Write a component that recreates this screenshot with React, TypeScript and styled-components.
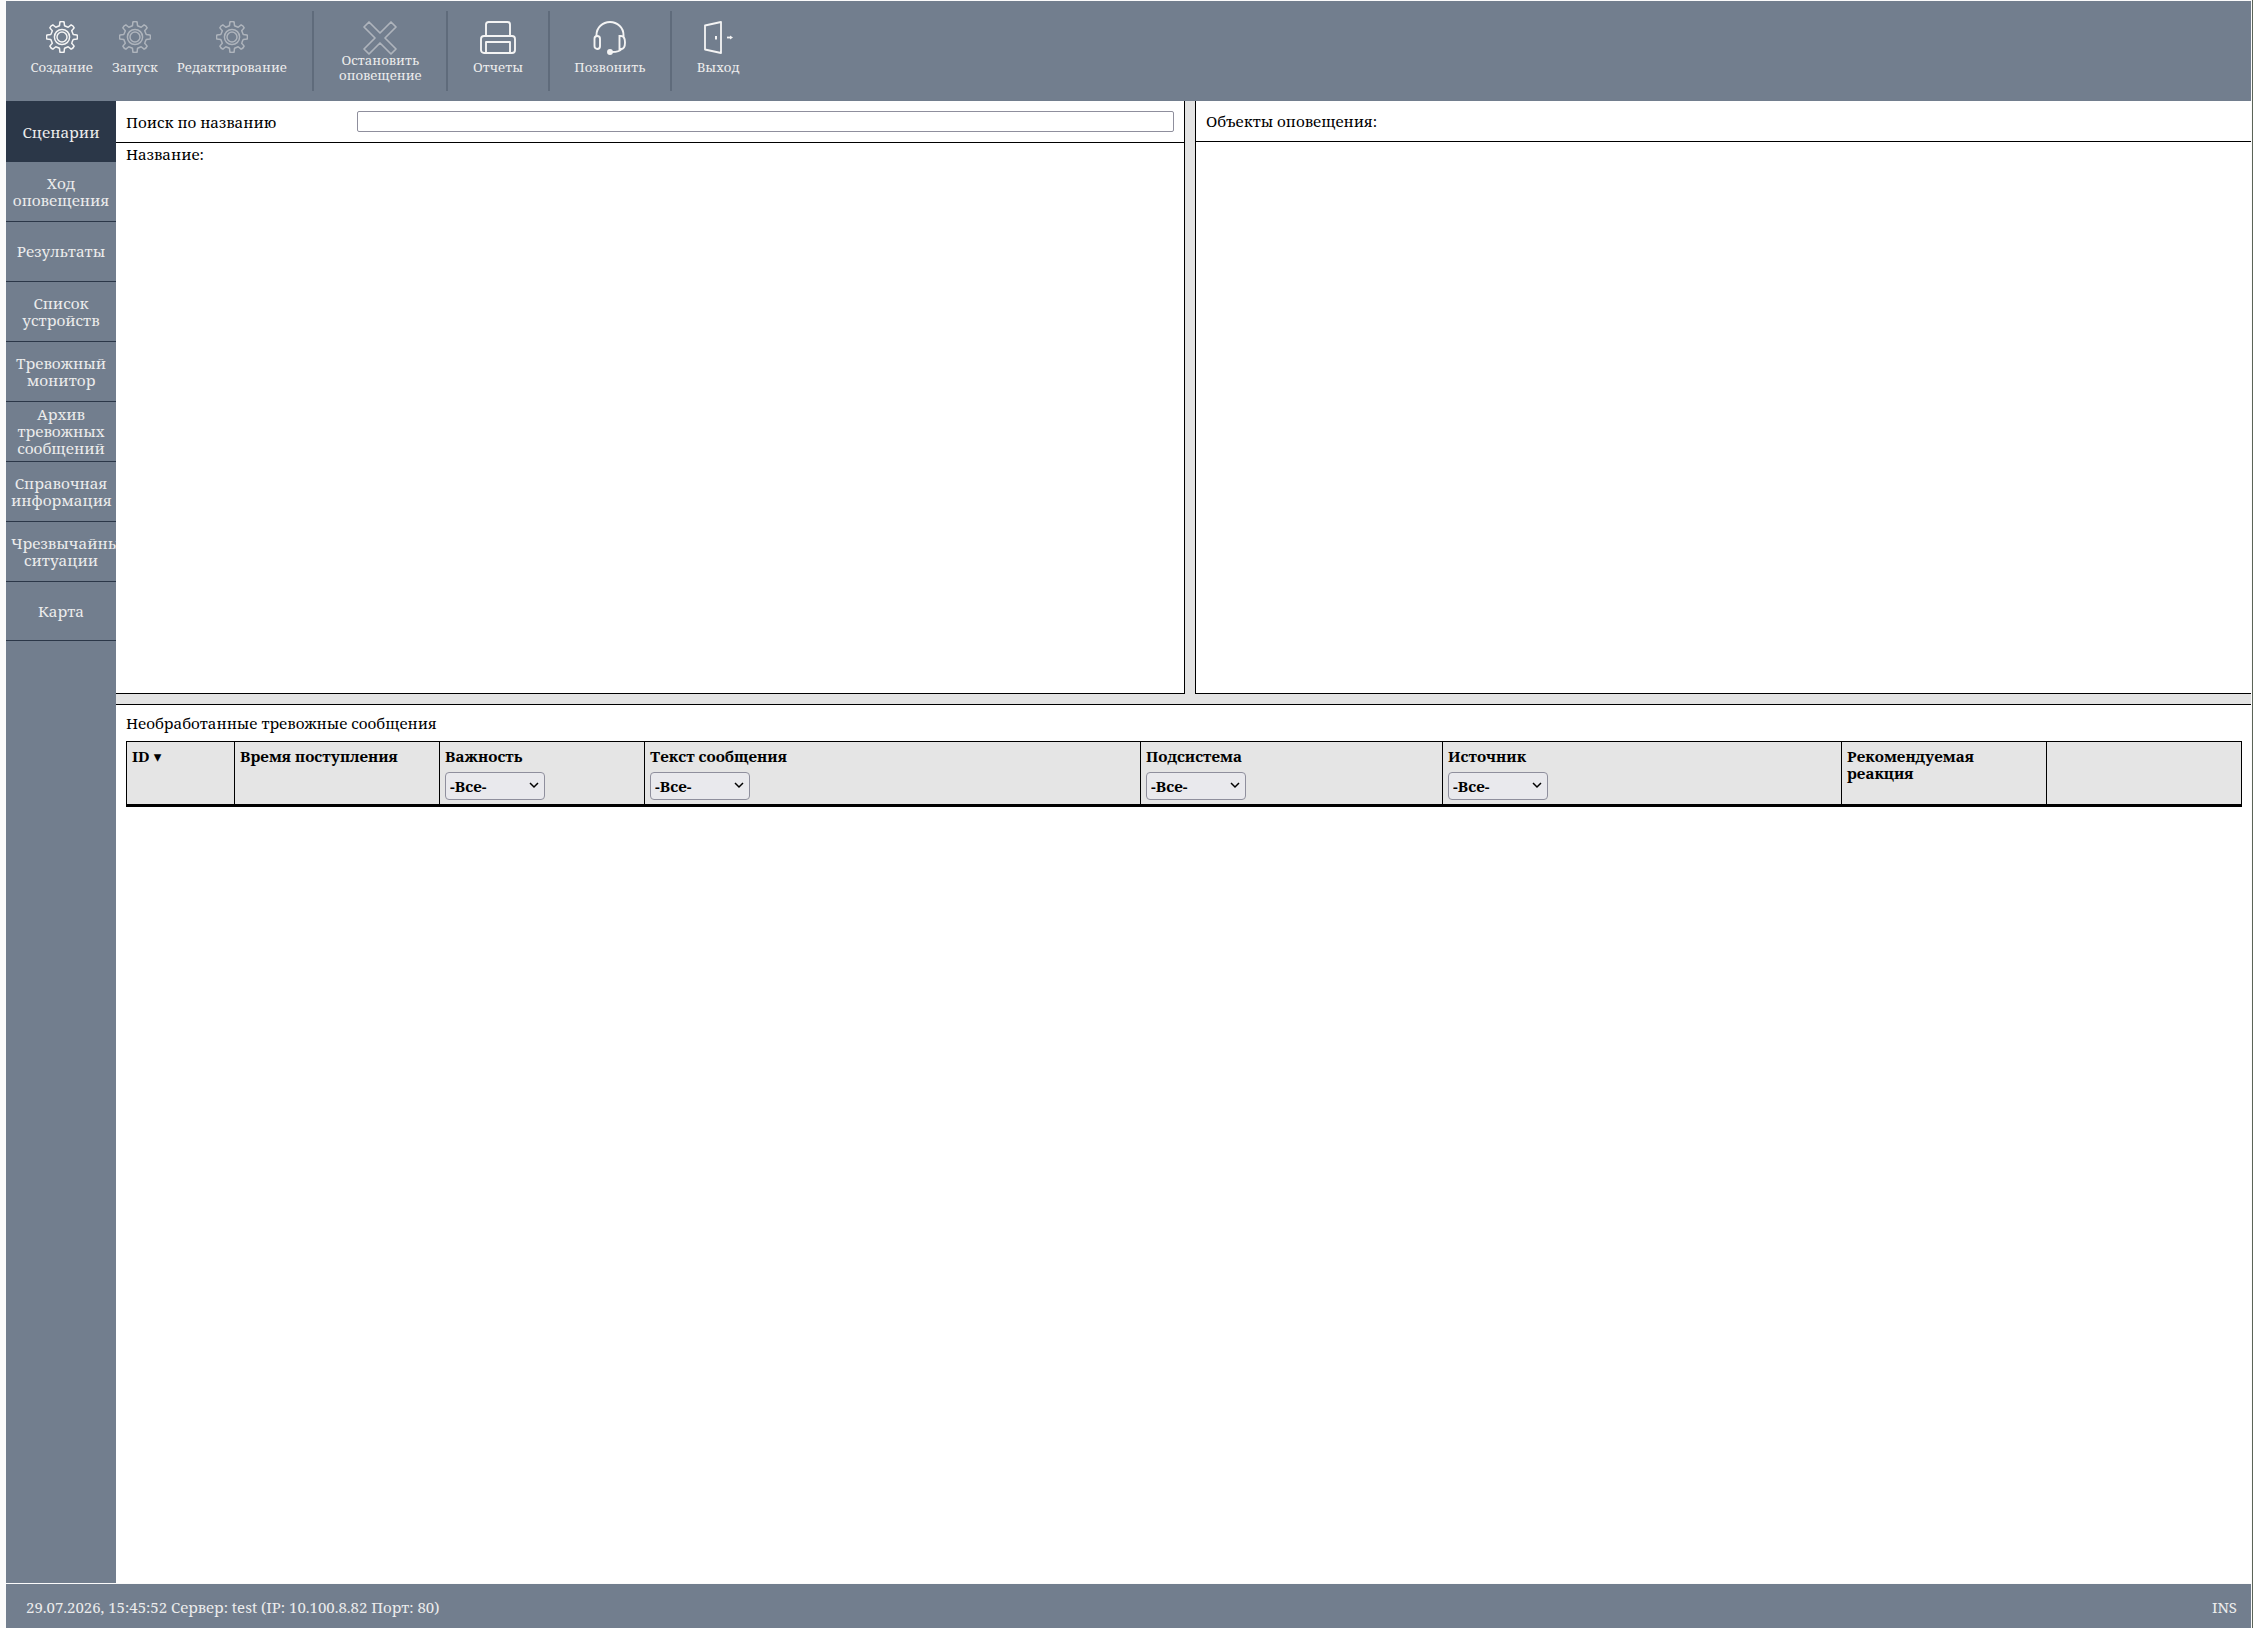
import React from 'react';
import styled, { createGlobalStyle } from 'styled-components';

const GlobalStyle = createGlobalStyle`
  html, body {
    margin: 0;
    padding: 0;
    height: 100%;
    background: #fbfbfb;
  }
  #root {
    height: 100%;
  }
`;

const Page = styled.div`
  box-sizing: border-box;
  height: 100vh;
  padding: 1px 1px 0 6px;
  display: flex;
  flex-direction: column;
  overflow: hidden;
  font-family: 'Noto Serif', 'Droid Serif', 'DejaVu Serif', serif;
  border-right: 1px solid #5b6458;
`;

const Toolbar = styled.div`
  height: 100px;
  flex: none;
  display: flex;
  align-items: center;
  padding-left: 15px;
  background-color: #727e8e;
`;

const ToolButton = styled.div<{ $wide?: boolean }>`
  height: 80px;
  padding: 0 ${({ $wide }) => ($wide ? '24.7px' : '9.5px')};
  display: flex;
  flex-direction: column;
  align-items: center;
  color: #ececec;
  font-size: 13.2px;
  line-height: 15px;
  text-align: center;
  white-space: pre-line;
`;

const IconSlot = styled.div<{ $disabled?: boolean }>`
  height: 32px;
  margin-top: 10px;
  color: ${({ $disabled }) => ($disabled ? '#aeb4bc' : '#f4f4f4')};
  svg {
    display: block;
  }
`;

const ToolLabel = styled.div<{ $double?: boolean }>`
  margin-top: ${({ $double }) => ($double ? '0' : '7px')};
`;

const Divider = styled.div<{ $first?: boolean }>`
  width: 2px;
  height: 80px;
  flex: none;
  margin-left: ${({ $first }) => ($first ? '16px' : '0')};
  background-color: #5f6b7b;
`;

const Body = styled.div`
  flex: 1;
  min-height: 0;
  display: flex;
`;

const Sidebar = styled.div`
  width: 110px;
  flex: none;
  background-color: #727e8e;
`;

const NavItem = styled.div<{ $active?: boolean }>`
  box-sizing: border-box;
  height: ${({ $active }) => ($active ? '61px' : '60px')};
  padding: ${({ $active }) => ($active ? '2px' : '0')} 5px 0;
  display: flex;
  align-items: center;
  justify-content: flex-start;
  overflow: hidden;
  background-color: ${({ $active }) => ($active ? '#2b3748' : 'transparent')};
  border-bottom: ${({ $active }) => ($active ? 'none' : '1px solid #2b3748')};
  color: #ececec;
  font-size: 15.3px;
  line-height: 17px;
  text-align: center;

  &:last-child {
    height: 59px;
  }
`;

const NavText = styled.div`
  width: 100px;
  flex: none;
  white-space: pre-line;
`;

const Content = styled.div`
  flex: 1;
  min-width: 0;
  display: flex;
  flex-direction: column;
  background-color: #fff;
`;

const TopArea = styled.div`
  height: 593px;
  flex: none;
  display: flex;
  background-color: #e3e3e3;
`;

const LeftPanel = styled.div`
  box-sizing: border-box;
  width: 1069px;
  flex: none;
  background-color: #fff;
  border-right: 1px solid #000;
  border-bottom: 1px solid #000;
`;

const RightPanel = styled.div`
  flex: 1;
  margin-left: 10px;
  background-color: #fff;
  border-left: 1px solid #000;
  border-bottom: 1px solid #000;
`;

const SearchRow = styled.div`
  height: 42px;
  box-sizing: border-box;
  padding: 0 10px;
  display: flex;
  align-items: center;
  border-bottom: 1px solid #000;
  font-size: 15.2px;
`;

const SearchLabel = styled.label`
  width: 231px;
  flex: none;
  padding-top: 1px;
`;

const SearchInput = styled.input`
  box-sizing: border-box;
  flex: none;
  width: 817px;
  height: 21px;
  padding: 0 4px;
  background: #fff;
  border: 1px solid #8f8f9d;
  border-radius: 2px;
`;

const NameLabel = styled.div`
  padding: 3px 10px;
  font-size: 15.2px;
  line-height: 17px;
`;

const ObjectsHeader = styled.div`
  height: 41px;
  box-sizing: border-box;
  padding: 0 10px;
  display: flex;
  align-items: center;
  border-bottom: 1px solid #000;
  font-size: 15.2px;
`;

const GutterBar = styled.div`
  height: 10px;
  flex: none;
  background-color: #e3e3e3;
  border-bottom: 1px solid #000;
`;

const AlarmSection = styled.div`
  flex: 1;
  padding: 9px 7px 0 10px;
`;

const AlarmTitle = styled.div`
  height: 27px;
  font-size: 15.2px;
  line-height: 18px;
`;

const AlarmTable = styled.table`
  width: 2116px;
  table-layout: fixed;
  border-collapse: collapse;
  border-top: 1px solid #000;
  border-left: 1px solid #000;
  border-bottom: 3px solid #000;
`;

const HeadCell = styled.th<{ $width: number }>`
  box-sizing: border-box;
  width: ${({ $width }) => $width}px;
  height: 64px;
  padding: 6px 5px 0;
  vertical-align: top;
  text-align: left;
  background-color: #e5e5e5;
  border-right: 1px solid #000;
  font-size: 15.2px;
  line-height: 17px;
  font-weight: bold;
`;

const SelectWrap = styled.div`
  position: relative;
  width: 100px;
  height: 28px;
  margin-top: 7px;
`;

const FilterSelect = styled.select`
  appearance: none;
  box-sizing: border-box;
  width: 100%;
  height: 100%;
  padding: 0 4px;
  background-color: #e9e9ed;
  border: 1px solid #8f8f9d;
  border-radius: 4px;
  color: #000;
  font-family: inherit;
  font-size: 15.2px;
  font-weight: bold;
`;

const Chevron = styled.svg`
  position: absolute;
  top: 10px;
  right: 6px;
  pointer-events: none;
`;

const StatusBar = styled.div`
  box-sizing: border-box;
  height: 44px;
  flex: none;
  margin-top: 1px;
  padding: 1px 14px 0 20px;
  display: flex;
  align-items: center;
  justify-content: space-between;
  background-color: #727e8e;
  color: #ececec;
  font-size: 15px;
`;

// 8-toothed outline, so every gear in the toolbar is the same shape
const gearPath = (() => {
  const pts: string[] = [];
  for (let i = 0; i < 8; i++) {
    const a = (i * Math.PI) / 4;
    const at = (r: number, d: number) => {
      const t = a + d;
      return `${(16 + r * Math.sin(t)).toFixed(2)} ${(16 - r * Math.cos(t)).toFixed(2)}`;
    };
    pts.push(
      `${i === 0 ? 'M' : 'L'}${at(11.5, -0.22)}`,
      `L${at(15.2, -0.14)}`,
      `Q${at(15.9, 0)} ${at(15.2, 0.14)}`,
      `L${at(11.5, 0.22)}`,
      `Q${at(11.2, 0.39)} ${at(11.5, 0.56)}`
    );
  }
  return pts.join(' ') + ' Z';
})();

const GearIcon = () => (
  <svg width="32" height="32" viewBox="0 0 32 32" fill="none" stroke="currentColor" strokeWidth="1.5">
    <path d={gearPath} strokeLinejoin="round" />
    <circle cx="16" cy="16" r="7.6" />
    <circle cx="16" cy="16" r="5" />
  </svg>
);

const StopIcon = () => (
  <svg width="34" height="34" viewBox="0 0 34 34" fill="none" stroke="currentColor" strokeWidth="1.7" strokeLinejoin="round">
    <path d="M6 1 L17 12 L28 1 L33 6 L22 17 L33 28 L28 33 L17 22 L6 33 L1 28 L12 17 L1 6 Z" />
  </svg>
);

const PrinterIcon = () => (
  <svg width="36" height="33" viewBox="0 0 36 33" fill="none" stroke="currentColor" strokeWidth="1.9" strokeLinejoin="round">
    <path d="M6 15 V3.500 Q6 1 8.500 1 H27.500 Q30 1 30 3.500 V15" />
    <rect x="1" y="15" width="34" height="17" rx="3" />
    <path d="M6 32 V21 H30 V32" />
  </svg>
);

const HeadsetIcon = () => (
  <svg width="34" height="34" viewBox="0 0 34 34" fill="none" stroke="currentColor" strokeWidth="1.9" strokeLinecap="round">
    <path d="M3.500 15 V14 A13.500 13 0 0 1 30.500 14 V15" />
    <rect x="1.500" y="15" width="5.500" height="13" rx="2.750" />
    <path d="M26.500 15 H28 Q32 15 32 21.500 Q32 28 28 28 H26.500 Z" />
    <path d="M28.500 28 Q26.500 31 19 31" />
    <circle cx="17" cy="31" r="2" fill="currentColor" />
  </svg>
);

const ExitIcon = () => (
  <svg width="31" height="33" viewBox="0 0 31 33" fill="none" stroke="currentColor" strokeWidth="1.8" strokeLinejoin="round">
    <path d="M2 4.500 L18 1 V32 L2 28.500 Z" />
    <rect x="12" y="15" width="2" height="3.500" fill="currentColor" stroke="none" />
    <path d="M24 16.500 H27" />
    <path d="M27 14.500 L30 16.500 L27 18.500 Z" fill="currentColor" stroke="none" />
  </svg>
);

const navItems = [
  'Ход\nоповещения',
  'Результаты',
  'Список\nустройств',
  'Тревожный\nмонитор',
  'Архив\nтревожных\nсообщений',
  'Справочная\nинформация',
  'Чрезвычайные\nситуации',
  'Карта',
];

const columns = [
  { title: 'ID ▾', width: 108 },
  { title: 'Время поступления', width: 205 },
  { title: 'Важность', width: 205, filter: true },
  { title: 'Текст сообщения', width: 496, filter: true },
  { title: 'Подсистема', width: 302, filter: true },
  { title: 'Источник', width: 399, filter: true },
  { title: 'Рекомендуемая реакция', width: 205 },
  { title: '', width: 195 },
];

const App = () => {
  return (
    <Page>
      <GlobalStyle />
      <Toolbar>
        <ToolButton>
          <IconSlot><GearIcon /></IconSlot>
          <ToolLabel>Создание</ToolLabel>
        </ToolButton>
        <ToolButton>
          <IconSlot $disabled><GearIcon /></IconSlot>
          <ToolLabel>Запуск</ToolLabel>
        </ToolButton>
        <ToolButton>
          <IconSlot $disabled><GearIcon /></IconSlot>
          <ToolLabel>Редактирование</ToolLabel>
        </ToolButton>
        <Divider $first />
        <ToolButton $wide>
          <IconSlot $disabled><StopIcon /></IconSlot>
          <ToolLabel $double>{'Остановить\nоповещение'}</ToolLabel>
        </ToolButton>
        <Divider />
        <ToolButton $wide>
          <IconSlot><PrinterIcon /></IconSlot>
          <ToolLabel>Отчеты</ToolLabel>
        </ToolButton>
        <Divider />
        <ToolButton $wide>
          <IconSlot><HeadsetIcon /></IconSlot>
          <ToolLabel>Позвонить</ToolLabel>
        </ToolButton>
        <Divider />
        <ToolButton $wide>
          <IconSlot><ExitIcon /></IconSlot>
          <ToolLabel>Выход</ToolLabel>
        </ToolButton>
      </Toolbar>

      <Body>
        <Sidebar>
          <NavItem $active><NavText>Сценарии</NavText></NavItem>
          {navItems.map((item) => (
            <NavItem key={item}><NavText>{item}</NavText></NavItem>
          ))}
        </Sidebar>

        <Content>
          <TopArea>
            <LeftPanel>
              <SearchRow>
                <SearchLabel>Поиск по названию</SearchLabel>
                <SearchInput />
              </SearchRow>
              <NameLabel>Название:</NameLabel>
            </LeftPanel>
            <RightPanel>
              <ObjectsHeader>Объекты оповещения:</ObjectsHeader>
            </RightPanel>
          </TopArea>
          <GutterBar />
          <AlarmSection>
            <AlarmTitle>Необработанные тревожные сообщения</AlarmTitle>
            <AlarmTable>
              <thead>
                <tr>
                  {columns.map((col) => (
                    <HeadCell key={col.title} $width={col.width}>
                      {col.title}
                      {col.filter ? (
                        <SelectWrap>
                          <FilterSelect>
                            <option>-Все-</option>
                          </FilterSelect>
                          <Chevron width="10" height="7" viewBox="0 0 10 7" fill="none" stroke="#000" strokeWidth="1.5">
                            <path d="M1 1 L5 5 L9 1" />
                          </Chevron>
                        </SelectWrap>
                      ) : null}
                    </HeadCell>
                  ))}
                </tr>
              </thead>
            </AlarmTable>
          </AlarmSection>
        </Content>
      </Body>

      <StatusBar>
        <span>29.07.2026, 15:45:52 Сервер: test (IP: 10.100.8.82 Порт: 80)</span>
        <span>INS</span>
      </StatusBar>
    </Page>
  );
};

export default App;
